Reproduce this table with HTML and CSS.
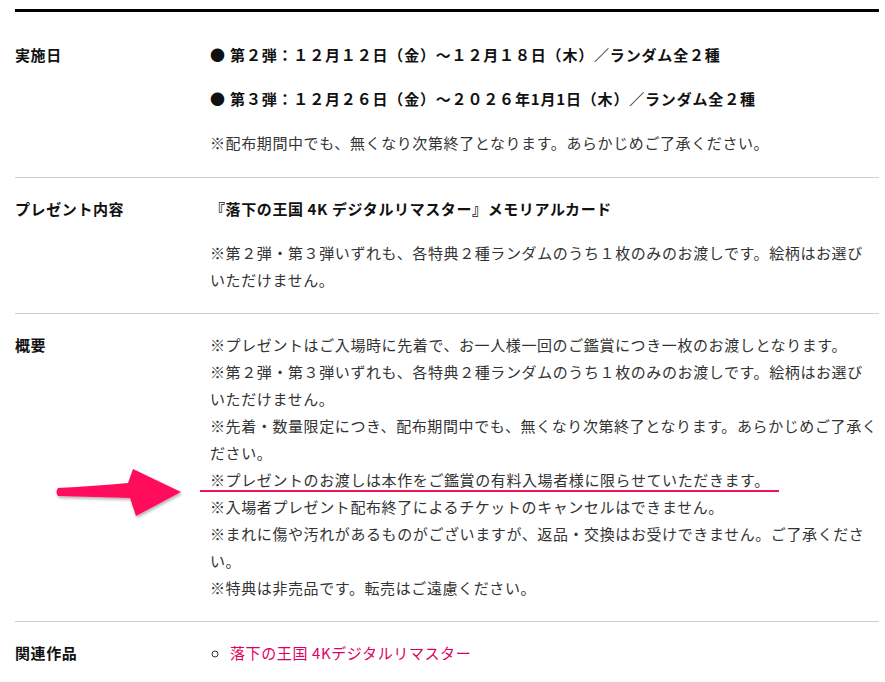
FILE: index.html
```html
<!DOCTYPE html>
<html lang="ja">
<head>
    <meta charset="UTF-8">
    <meta name="viewport" content="width=device-width, initial-scale=1.0">
    <title>入場者プレゼント</title>
    <link rel="stylesheet" href="styles.css">
</head>
<body>

    <div class="page">
        <div class="info-table">
            <div class="info-row">
                <div class="info-label">実施日</div>
                <div class="info-value">
                    <p class="date">● 第２弾：１２月１２日（金）～１２月１８日（木）／ランダム全２種</p>
                    <p class="date">● 第３弾：１２月２６日（金）～２０２６年1月1日（木）／ランダム全２種</p>
                    <p>※配布期間中でも、無くなり次第終了となります。あらかじめご了承ください。</p>
                </div>
            </div>
            <div class="info-row">
                <div class="info-label">プレゼント内容</div>
                <div class="info-value">
                    <p class="item">『落下の王国 4K デジタルリマスター』メモリアルカード</p>
                    <p>※第２弾・第３弾いずれも、各特典２種ランダムのうち１枚のみのお渡しです。絵柄はお選び<span class="nobr">いただけません。</span></p>
                </div>
            </div>
            <div class="info-row">
                <div class="info-label">概要</div>
                <div class="info-value">
                    <p>※プレゼントはご入場時に先着で、お一人様一回のご鑑賞につき一枚のお渡しとなります。<br>
                    ※第２弾・第３弾いずれも、各特典２種ランダムのうち１枚のみのお渡しです。絵柄はお選び<span class="nobr">いただけません。</span><br>
                    ※先着・数量限定につき、配布期間中でも、無くなり次第終了となります。あらかじめご了承ください。<br>
                    ※プレゼントのお渡しは本作をご鑑賞の有料入場者様に限らせていただきます。<br>
                    ※入場者プレゼント配布終了によるチケットのキャンセルはできません。<br>
                    ※まれに傷や汚れがあるものがございますが、返品・交換はお受けできません。ご了承ください。<br>
                    ※特典は非売品です。転売はご遠慮ください。</p>
                </div>
            </div>
            <div class="info-row">
                <div class="info-label">関連作品</div>
                <div class="info-value">
                    <ul class="related">
                        <li><a href="#">落下の王国 4Kデジタルリマスター</a></li>
                    </ul>
                </div>
            </div>
        </div>

        <!-- annotation drawn over the page -->
        <svg class="annot" width="885" height="682" viewBox="0 0 885 682">
            <defs>
                <filter id="shadow" x="-20%" y="-40%" width="140%" height="180%">
                    <feDropShadow dx="1" dy="2" stdDeviation="1.5" flood-color="#000" flood-opacity="0.3"/>
                </filter>
            </defs>
            <path d="M58,488 Q95,486 128,483 L133,469 L181,492 L136,516 L130,498 Q95,497 58,496 Q55,492 58,488 Z" fill="#ff0f5c" filter="url(#shadow)"/>
            <rect x="200" y="490" width="579" height="2" fill="#ef1258"/>
        </svg>
    </div>

</body>
</html>
```

FILE: styles.css
```css
body {
    margin: 0;
    font-family: "Noto Sans CJK JP", sans-serif;
    font-size: 15px;
    line-height: 27px;
    letter-spacing: 0.04em;
    color: #333;
    background: #fff;
}
.page {
    position: relative;
    padding: 9px 6px 0 15px;
    height: 673px;
    overflow: hidden;
}
.info-table {
    border-top: 3px solid #000;
}
.info-row {
    display: grid;
    grid-template-columns: 195px 1fr;
    padding: 17px 0 20px;
    border-bottom: 1px solid #d0d0d0;
}
.info-row:first-child {
    padding-top: 29px;
    padding-bottom: 21px;
}
.info-label {
    font-weight: bold;
    color: #111;
}
.info-value p {
    margin: 0 0 17px;
}
.info-value p:last-child {
    margin-bottom: 0;
}
.nobr {
    white-space: nowrap;
}
.date {
    font-weight: bold;
    color: #111;
    letter-spacing: 0.055em;
}
.item {
    font-weight: bold;
    color: #111;
}
.related {
    margin: 0;
    padding-left: 20px;
    list-style: circle;
}
.related a {
    color: #e2005f;
    text-decoration: none;
}
.annot {
    position: absolute;
    top: 0;
    left: 0;
    pointer-events: none;
}
```
